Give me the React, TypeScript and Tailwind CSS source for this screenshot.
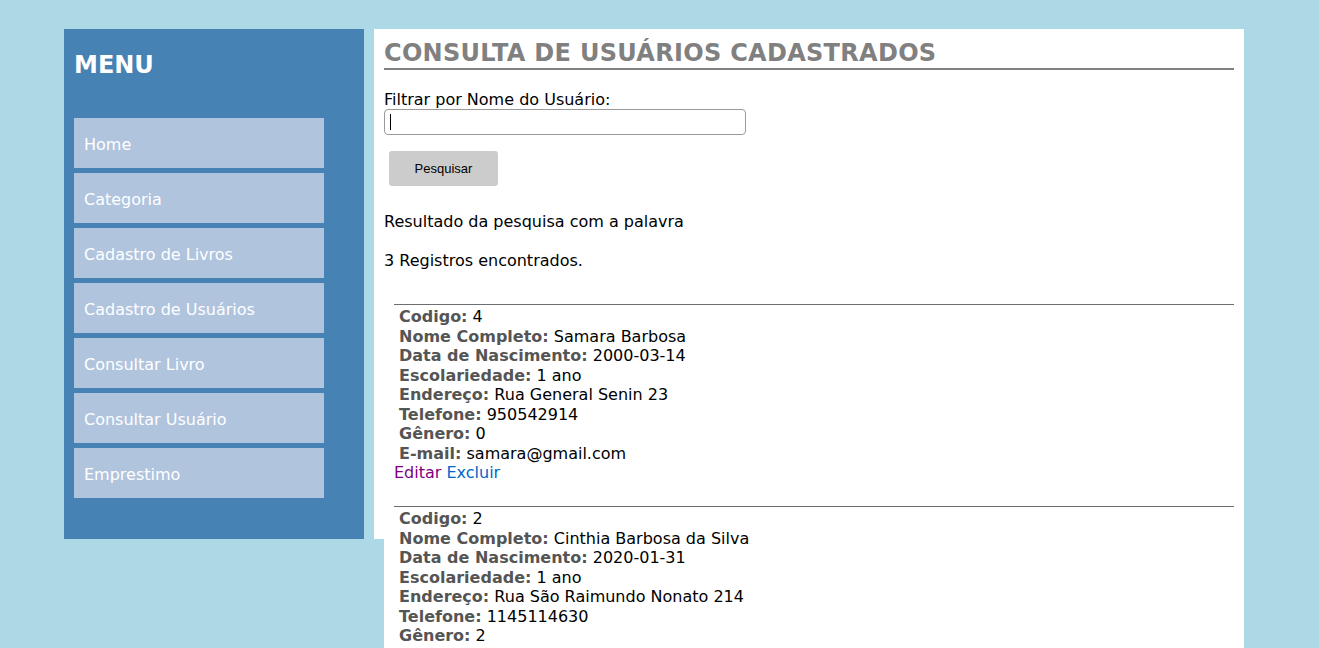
import React from "react";

const menu = [
  "Home",
  "Categoria",
  "Cadastro de Livros",
  "Cadastro de Usuários",
  "Consultar Livro",
  "Consultar Usuário",
  "Emprestimo",
];

const records: { fields: [string, string][]; actions: boolean }[] = [
  {
    fields: [
      ["Codigo:", "4"],
      ["Nome Completo:", "Samara Barbosa"],
      ["Data de Nascimento:", "2000-03-14"],
      ["Escolariedade:", "1 ano"],
      ["Endereço:", "Rua General Senin 23"],
      ["Telefone:", "950542914"],
      ["Gênero:", "0"],
      ["E-mail:", "samara@gmail.com"],
    ],
    actions: true,
  },
  {
    fields: [
      ["Codigo:", "2"],
      ["Nome Completo:", "Cinthia Barbosa da Silva"],
      ["Data de Nascimento:", "2020-01-31"],
      ["Escolariedade:", "1 ano"],
      ["Endereço:", "Rua São Raimundo Nonato 214"],
      ["Telefone:", "1145114630"],
      ["Gênero:", "2"],
      ["E-mail:", "cinthia@gmail.com"],
    ],
    actions: true,
  },
];

export default function App() {
  return (
    <div
      className="min-h-[648px] bg-[#add8e6] text-black"
      style={{ fontFamily: '"DejaVu Sans", Verdana, sans-serif' }}
    >
      <div className="flex items-start gap-[10px] pl-[64px] pt-[29px]">
        <aside className="w-[300px] h-[510px] shrink-0 bg-[#4682b4] px-[10px] pt-[21px]">
          <h2 className="text-[24px] font-bold text-white leading-[30px]">MENU</h2>
          <nav className="mt-[38px] flex flex-col gap-[5px]">
            {menu.map((m) => (
              <div
                key={m}
                className="w-[250px] h-[50px] bg-[#b0c4de] flex items-center px-[10px] pt-[3px] text-[16px] text-white"
              >
                {m}
              </div>
            ))}
          </nav>
        </aside>
        <main className="w-[870px] h-[510px] shrink-0 bg-white pl-[10px]">
          <div className="w-[860px] bg-white pr-[10px] pt-[9px] text-[16px] leading-[19px]">
            <h1 className="text-[24px] font-bold text-[#808080] leading-[30px] tracking-[0.3px] border-b-2 border-[#808080]">
              CONSULTA DE USUÁRIOS CADASTRADOS
            </h1>
            <div className="mt-[20px]">Filtrar por Nome do Usuário:</div>
            <div className="w-[362px] h-[26px] border border-[#9a9a9a] rounded-[4px] flex items-center pl-[5px]">
              <span className="block w-[1px] h-[16px] bg-black" />
            </div>
            <button
              className="mt-[16px] ml-[5px] w-[109px] h-[35px] bg-[#cccccc] rounded-[3px] text-[13px] text-black"
              style={{ fontFamily: '"Liberation Sans", Arial, sans-serif' }}
            >
              Pesquisar
            </button>
            <div className="mt-[26px] leading-[19px]">Resultado da pesquisa com a palavra</div>
            <div className="mt-[20px] leading-[19px]">3 Registros encontrados.</div>
            <div className="ml-[10px] mt-[34px]">
              {records.map((r, i) => (
                <div key={i} className={i > 0 ? "mt-[24px]" : ""}>
                  <div className="h-[1px] bg-[#6e6e6e] mb-[2px]" />
                  <div className="pl-[5px]">
                    {r.fields.map(([k, v]) => (
                      <div key={k} className="leading-[19.5px]">
                        <span className="font-bold text-[#555555]">{k}</span> {v}
                      </div>
                    ))}
                  </div>
                  {r.actions && (
                    <div className="leading-[19px]">
                      <span className="text-[#800080]">Editar</span>{" "}
                      <span className="text-[#0066cc]">Excluir</span>
                    </div>
                  )}
                </div>
              ))}
            </div>
          </div>
        </main>
      </div>
    </div>
  );
}
